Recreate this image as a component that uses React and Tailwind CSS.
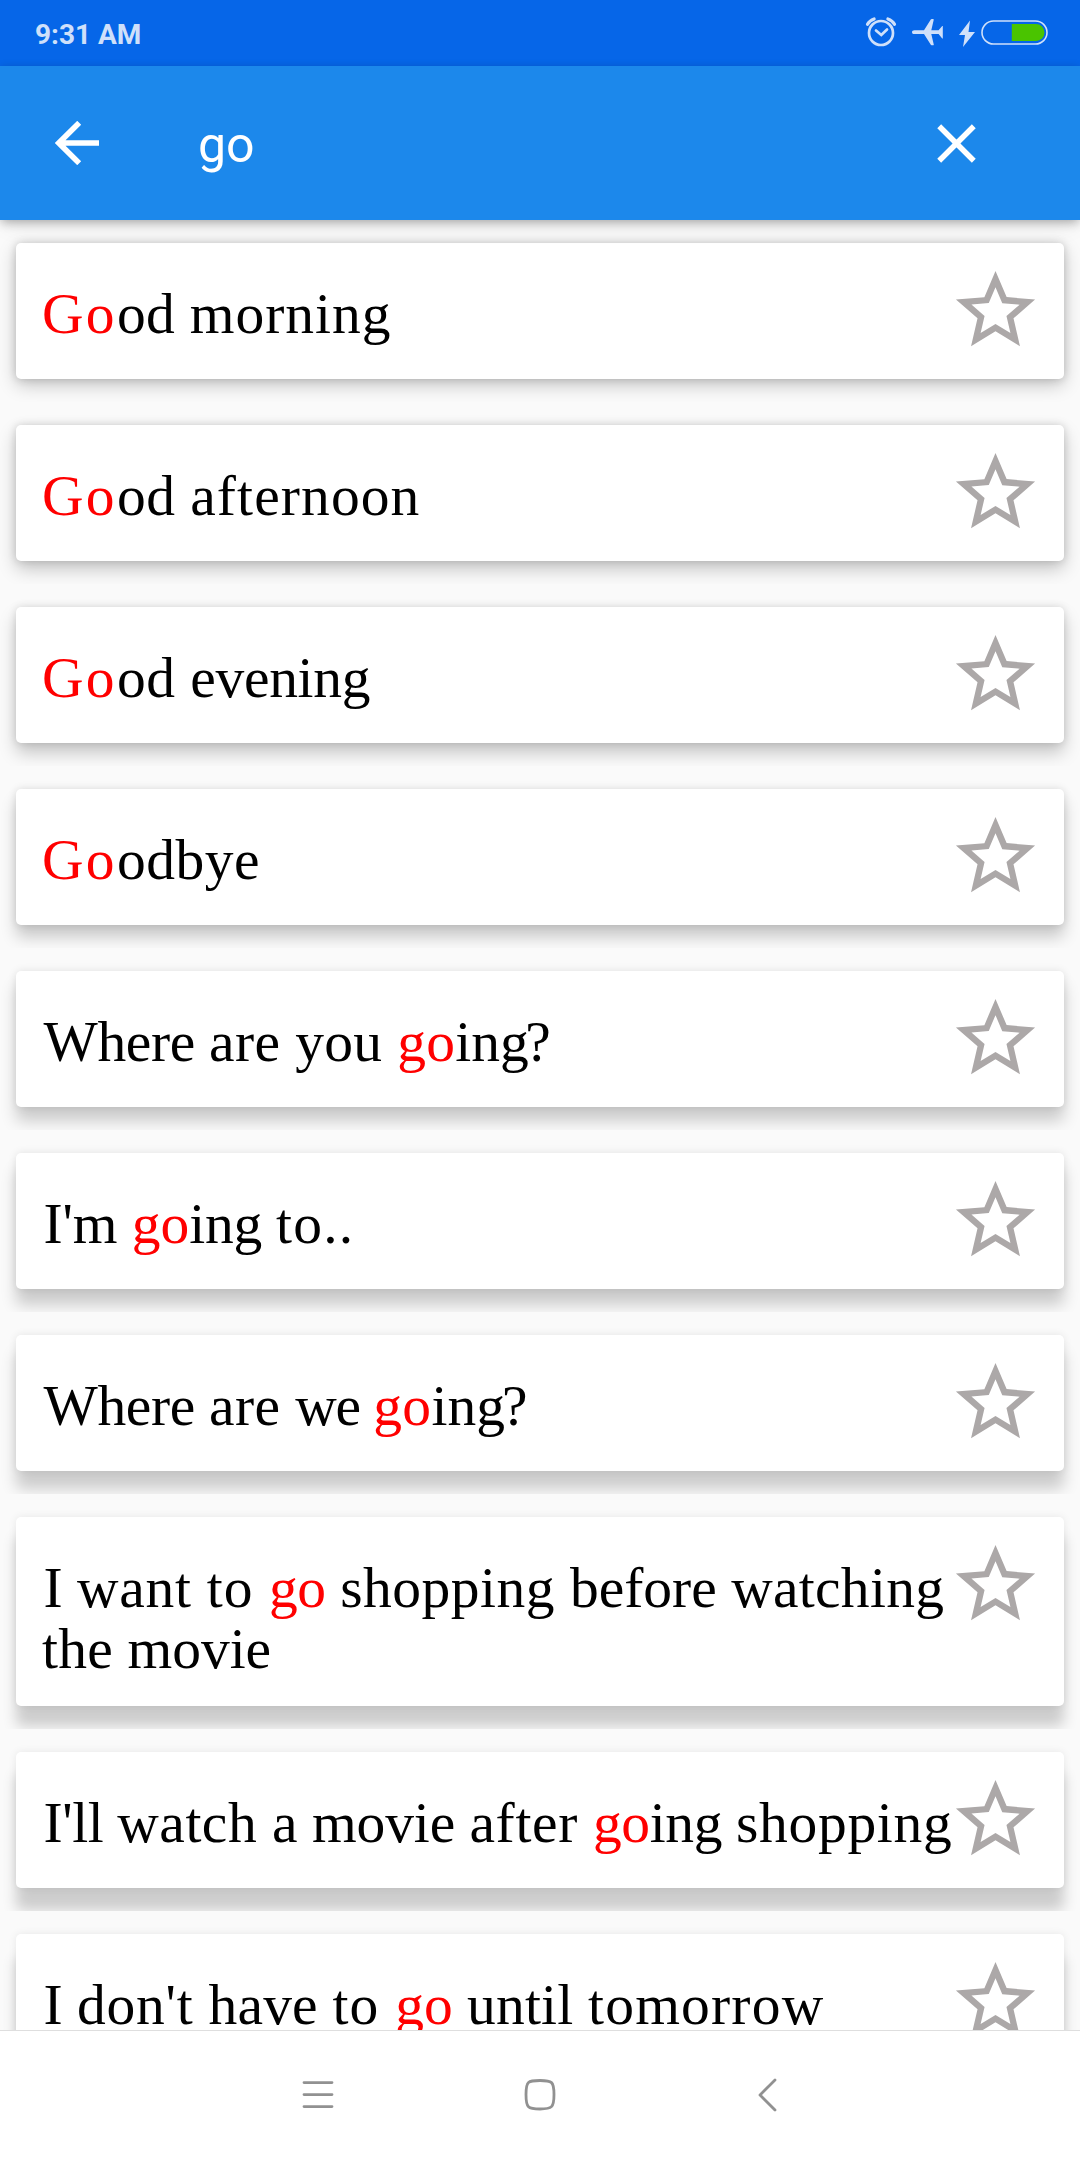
const query = "go";

// each phrase is a list of [chunk, letter spacing]
// the shadow gets longer for cards further down the screen
const phrases = [
  {
    shadow: "shadow-[0_6px_18px_rgba(0,0,0,0.22),0_0_8px_rgba(0,0,0,0.16)]",
    chunks: [["Go", "tracking-[2.3px]"], ["od ", "tracking-[0.3px]"], ["morning", "tracking-[1px]"]],
  },
  {
    shadow: "shadow-[0_8px_18px_rgba(0,0,0,0.22),0_0_8px_rgba(0,0,0,0.15)]",
    chunks: [["Go", "tracking-[2.3px]"], ["od ", "tracking-[0.5px]"], ["afternoon", "tracking-[1.1px]"]],
  },
  {
    shadow: "shadow-[0_10px_17px_rgba(0,0,0,0.21),0_0_8px_rgba(0,0,0,0.13)]",
    chunks: [["Go", "tracking-[2.3px]"], ["od ", "tracking-[0.5px]"], ["evening", "tracking-[-0.3px]"]],
  },
  {
    shadow: "shadow-[0_12px_16px_rgba(0,0,0,0.2),0_0_8px_rgba(0,0,0,0.12)]",
    chunks: [["Go", "tracking-[2.3px]"], ["odbye", "tracking-[0.5px]"]],
  },
  {
    shadow: "shadow-[0_14px_16px_rgba(0,0,0,0.19),0_0_8px_rgba(0,0,0,0.1)]",
    chunks: [
      ["Where ", "tracking-[-0.35px]"],
      ["are ", "tracking-[0.4px]"],
      ["you ", "tracking-[0.35px]"],
      ["go", "tracking-[0.3px]"],
      ["in", "tracking-normal"],
      ["g", "tracking-[-3.5px]"],
      ["?", "tracking-normal"],
    ],
  },
  {
    shadow: "shadow-[0_16px_15px_rgba(0,0,0,0.19),0_0_8px_rgba(0,0,0,0.1)]",
    chunks: [["I'm ", "tracking-[-0.1px]"], ["go", "tracking-normal"], ["ing ", "tracking-[-0.25px]"], ["to..", "tracking-[1.2px]"]],
  },
  {
    shadow: "shadow-[0_18px_15px_rgba(0,0,0,0.185),0_0_8px_rgba(0,0,0,0.09)]",
    chunks: [
      ["Where ", "tracking-[-0.35px]"],
      ["are ", "tracking-[0.4px]"],
      ["we ", "tracking-[-1.1px]"],
      ["go", "tracking-[0.3px]"],
      ["in", "tracking-normal"],
      ["g", "tracking-[-3px]"],
      ["?", "tracking-normal"],
    ],
  },
  {
    shadow: "shadow-[0_20px_14px_rgba(0,0,0,0.185),0_0_8px_rgba(0,0,0,0.08)]",
    chunks: [
      ["I ", "tracking-normal"],
      ["want ", "tracking-[0.7px]"],
      ["to ", "tracking-[1.1px]"],
      ["go", "tracking-[-0.5px]"],
      [" ", "tracking-[0.2px]"],
      ["shopping ", "tracking-[0.5px]"],
      ["before ", "tracking-normal"],
      ["watching ", "tracking-[0.3px]"],
      ["the ", "tracking-[0.2px]"],
      ["movie", "tracking-normal"],
    ],
  },
  {
    shadow: "shadow-[0_22px_14px_rgba(0,0,0,0.185),0_0_8px_rgba(0,0,0,0.08)]",
    chunks: [
      ["I'll ", "tracking-[-0.4px]"],
      ["watch ", "tracking-[0.5px]"],
      ["a ", "tracking-normal"],
      ["movie ", "tracking-[-0.1px]"],
      ["after ", "tracking-[0.65px]"],
      ["go", "tracking-[-0.4px]"],
      ["ing ", "tracking-[-0.4px]"],
      ["shopping", "tracking-[0.7px]"],
    ],
  },
  {
    shadow: "shadow-[0_24px_14px_rgba(0,0,0,0.185),0_0_8px_rgba(0,0,0,0.08)]",
    chunks: [
      ["I ", "tracking-normal"],
      ["don't ", "tracking-[0.75px]"],
      ["have ", "tracking-[0.2px]"],
      ["to ", "tracking-[1.2px]"],
      ["go", "tracking-normal"],
      [" ", "tracking-normal"],
      ["until ", "tracking-[0.2px]"],
      ["tomorrow", "tracking-[1.2px]"],
    ],
  },
];

function StatusBar() {
  return (
    <div className="flex h-[66px] shrink-0 items-center bg-[#0666e8] pl-[35px] pr-[30px]">
      <span className="pt-[3px] text-[28px] font-bold leading-none text-[#cfe0fa]">9:31 AM</span>
      <svg className="ml-auto h-[66px] w-[190px]" viewBox="860 0 190 66" fill="none">
        {/* alarm */}
        <g stroke="#cfe0fa" strokeWidth="2.7" strokeLinecap="round">
          <circle cx="881" cy="33" r="12" />
          <path d="M876 30.5l5.3 4.5 5.7-5.5" />
          <path d="M867.5 24.3c1.4-2.6 3.6-4.4 6.6-5.4M894.5 24.3c-1.4-2.6-3.6-4.4-6.6-5.4" strokeWidth="3.2" />
        </g>
        {/* airplane */}
        <path
          d="M912 32.2c0-1.2 1-1.9 2.4-1.9h9.600l6.800-10.800c.4-.8 3-.8 3 0l-2.500 10.800h7.300l3.600-4.400h.6v12.600h-.6l-3.600-4.400h-7.300l2.500 10.600c0 .8-2.500.8-3 0l-6.800-10.600h-9.600c-1.400 0-2.400-.7-2.400-1.900z"
          fill="#cfe0fa"
        />
        {/* charging */}
        <path d="M970 20.5l-11 14.5h6l-2 12 12-15h-6.5z" fill="#cfe0fa" />
        <rect x="982" y="21" width="65" height="23" rx="11.5" stroke="#cfe0fa" strokeWidth="1.6" />
        <path d="M1011.8 24h24.2a8.5 8.5 0 0 1 0 17h-24.2z" fill="#4ac400" />
      </svg>
    </div>
  );
}

function SearchBar() {
  return (
    <div className="relative z-10 flex h-[154px] shrink-0 items-center bg-[#1c88eb] pl-[55px] pr-[104px] shadow-[0_3px_10px_-1px_rgba(0,0,0,0.32),0_12px_20px_-4px_rgba(0,0,0,0.06)]">
      <svg className="h-11 w-11" viewBox="0 0 44 44" fill="none" stroke="#fff" strokeWidth="5.6">
        <path d="M44 22H5M24.2 1.8L3.8 22l20.400 20.200" />
      </svg>
      <span className="ml-[99px] pt-[3px] text-[50px] leading-none text-white">go</span>
      <svg className="ml-auto h-[39px] w-[39px]" viewBox="0 0 39 39" stroke="#fff" strokeWidth="5.5">
        <path d="M2.2 2.2l34.600 34.600M36.800 2.200L2.200 36.800" />
      </svg>
    </div>
  );
}

function PhraseCard({ chunks, shadow }) {
  const startsWithQuery = chunks[0][0].toLowerCase() === query;

  return (
    <li className="shrink-0 overflow-hidden px-4 py-[23px]">
      <div className={`flex min-h-[136px] items-start rounded-[5px] bg-white pl-[26px] ${shadow}`}>
        <p
          className={`w-[914px] shrink-0 pt-[41px] pb-[27px] font-['Liberation_Serif',serif] text-[57.5px] leading-[60.5px] text-black ${
            startsWithQuery ? "" : "indent-[1.5px]"
          }`}
        >
          {chunks.map(([text, tracking], i) => (
            <span key={i} className={`${tracking} ${text.toLowerCase() === query ? "text-[#ff0000]" : ""}`}>
              {text}
            </span>
          ))}
        </p>
        <svg className="-mb-10 -ml-2 mt-5 h-[95px] w-[95px] shrink-0" viewBox="0 0 24 24" fill="#aca8a8">
          <path d="M22 9.24l-7.19-.62L12 2 9.19 8.63 2 9.24l5.46 4.73L5.82 21 12 17.27 18.18 21l-1.63-7.03L22 9.24zM12 15.4l-3.76 2.27 1-4.28-3.32-2.88 4.38-.38L12 6.1l1.71 4.04 4.38.38-3.32 2.88 1 4.28L12 15.4z" />
        </svg>
      </div>
    </li>
  );
}

function NavBar() {
  return (
    <div className="relative z-10 flex h-[130px] shrink-0 items-center justify-center border-t border-[#dedede] bg-white">
      <svg
        className="-mt-[2px] h-10 w-[480px]"
        viewBox="300 2075 480 40"
        fill="none"
        stroke="#919191"
        strokeWidth="2.8"
        strokeLinecap="round"
        strokeLinejoin="round"
      >
        <path d="M304 2082.6h28M304 2094.6h28M304 2106.6h28" />
        <path d="M540 2080.5c12 0 14 1 14 14s-2 14.5-14 14.5-14-1-14-14.500 2-14 14-14z" />
        <path d="M775 2080l-15 15 15 15" />
      </svg>
    </div>
  );
}

export default function App() {
  return (
    <div className="flex h-[2160px] w-[1080px] flex-col overflow-hidden bg-[#fafafa] font-[Roboto,sans-serif]">
      <StatusBar />
      <SearchBar />
      <ul className="flex min-h-0 flex-1 flex-col overflow-hidden">
        {phrases.map((phrase, i) => (
          <PhraseCard key={i} chunks={phrase.chunks} shadow={phrase.shadow} />
        ))}
      </ul>
      <NavBar />
    </div>
  );
}
